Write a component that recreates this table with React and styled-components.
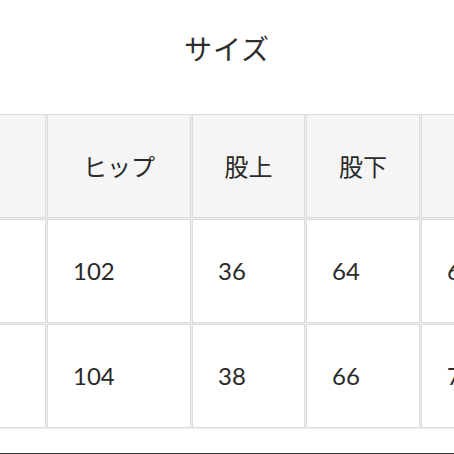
import React from 'react';
import styled, { createGlobalStyle } from 'styled-components';

const GlobalStyle = createGlobalStyle`
  html, body {
    margin: 0;
    padding: 0;
    background: #ffffff;
    overflow: hidden;
  }
  body {
    font-family: 'Lato', 'Noto Sans CJK JP', sans-serif;
    color: #2b2b2b;
  }
`;

const Page = styled.div`
  width: 454px;
  height: 454px;
  display: flex;
  flex-direction: column;
  overflow: hidden;
`;

const Title = styled.h2`
  margin: 0;
  height: 114px;
  display: flex;
  justify-content: center;
  padding-top: 29px;
  box-sizing: border-box;
  font-family: 'Noto Sans CJK JP', sans-serif;
  font-weight: 400;
  font-size: 28px;
  line-height: 38px;
  color: #2e2e2e;
  letter-spacing: 1px;
`;

const TableWrap = styled.div`
  width: 454px;
  overflow: hidden;
`;

const Table = styled.table`
  border-collapse: separate;
  border-spacing: 1px 1px;
  margin: -1px 0 0 -1px;
  table-layout: fixed;
  width: ${({ total }) => total}px;
  background: #ececec;
`;

const Row = styled.tr`
  height: 104px;
`;

const Cell = styled.td`
  box-sizing: border-box;
  width: ${({ w }) => w}px;
  border: 1px solid #dcdcdc;
  border-left-width: ${({ first }) => (first ? 0 : 1)}px;
  background: ${({ head }) => (head ? '#f5f5f5' : '#ffffff')};
  padding: 0 0 0 ${({ head }) => (head ? 0 : 25)}px;
  text-align: ${({ head }) => (head ? 'center' : 'left')};
  vertical-align: middle;
  white-space: nowrap;
  overflow: hidden;
  font-family: ${({ head }) =>
    head ? "'Noto Sans CJK JP', sans-serif" : "'Lato', 'Noto Sans CJK JP', sans-serif"};
  font-size: 24px;
  line-height: 30px;
  color: #2a2a2a;
`;

const Footer = styled.div`
  margin-top: auto;
  height: 1px;
  background: #3a3a3a;
`;

const widths = [46, 144, 113, 114, 113];
const total = widths.reduce((a, b) => a + b, 0) + widths.length + 1;
const header = ['', 'ヒップ', '股上', '股下', ''];
const rows = [
  ['', '102', '36', '64', '68'],
  ['', '104', '38', '66', '70'],
];

const App = () => (
  <Page>
    <GlobalStyle />
    <Title>サイズ</Title>
    <TableWrap>
      <Table total={total}>
        <tbody>
          <Row>
            {header.map((h, i) => (
              <Cell key={i} head w={widths[i]} first={i === 0}>
                {h}
              </Cell>
            ))}
          </Row>
          {rows.map((r, ri) => (
            <Row key={ri}>
              {r.map((v, i) => (
                <Cell key={i} w={widths[i]} first={i === 0}>
                  {v}
                </Cell>
              ))}
            </Row>
          ))}
        </tbody>
      </Table>
    </TableWrap>
    <Footer />
  </Page>
);

export default App;
